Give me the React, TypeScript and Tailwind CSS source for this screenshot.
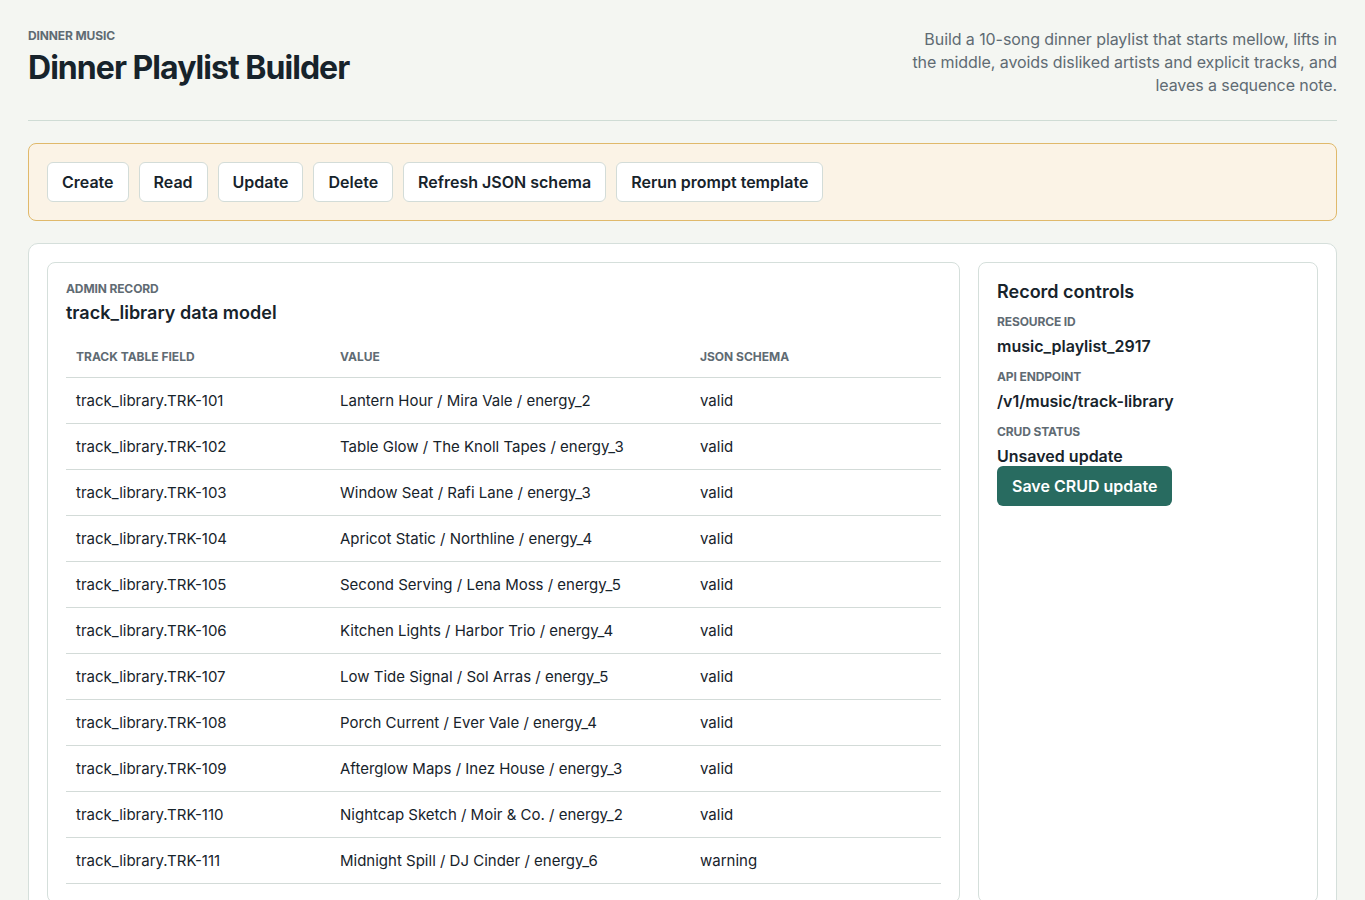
import React from "react";

const rows: [string, string, string][] = [
  ["track_library.TRK-101", "Lantern Hour / Mira Vale / energy_2", "valid"],
  ["track_library.TRK-102", "Table Glow / The Knoll Tapes / energy_3", "valid"],
  ["track_library.TRK-103", "Window Seat / Rafi Lane / energy_3", "valid"],
  ["track_library.TRK-104", "Apricot Static / Northline / energy_4", "valid"],
  ["track_library.TRK-105", "Second Serving / Lena Moss / energy_5", "valid"],
  ["track_library.TRK-106", "Kitchen Lights / Harbor Trio / energy_4", "valid"],
  ["track_library.TRK-107", "Low Tide Signal / Sol Arras / energy_5", "valid"],
  ["track_library.TRK-108", "Porch Current / Ever Vale / energy_4", "valid"],
  ["track_library.TRK-109", "Afterglow Maps / Inez House / energy_3", "valid"],
  ["track_library.TRK-110", "Nightcap Sketch / Moir & Co. / energy_2", "valid"],
  ["track_library.TRK-111", "Midnight Spill / DJ Cinder / energy_6", "warning"],
];

const actions = ["Create", "Read", "Update", "Delete", "Refresh JSON schema", "Rerun prompt template"];

export default function App() {
  return (
    <div
      className="min-h-screen bg-[#f4f6f2] px-[28px] pt-[28px] text-[#17232b]"
      style={{ fontFamily: "Inter, 'Noto Sans', sans-serif" }}
    >
      <header className="flex items-start justify-between border-b border-[#cfdcd5] pb-[23px]">
        <div>
          <div className="text-[12px] font-bold uppercase leading-4 tracking-[-0.01em] text-[#5f6b73]">Dinner music</div>
          <h1 className="mt-[4px] text-[32px] font-bold leading-[40px] tracking-[-0.03em] text-[#17232b]">
            Dinner Playlist Builder
          </h1>
        </div>
        <p className="w-[440px] text-right text-[16px] leading-[23px] tracking-[-0.005em] text-[#5f6b73]">
          Build a 10-song dinner playlist that starts mellow, lifts in the middle, avoids disliked artists and explicit
          tracks, and leaves a sequence note.
        </p>
      </header>

      <div className="mt-[22px] flex flex-wrap gap-[10px] rounded-[8px] border border-[#e0b96b] bg-[#fbf3e6] p-[18px]">
        {actions.map((a) => (
          <button
            key={a}
            className="h-[40px] rounded-[6px] border border-[#d3dcd8] bg-white px-[14px] text-[16px] font-semibold text-[#17232b]"
          >
            {a}
          </button>
        ))}
      </div>

      <div className="mt-[22px] flex items-stretch gap-[18px] rounded-[10px] border border-[#d5dfdb] bg-white p-[18px]">
        <section className="flex-1 rounded-[8px] border border-[#d5dfdb] p-[18px]">
          <div className="text-[12px] font-bold uppercase leading-4 tracking-[-0.01em] text-[#5f6b73]">Admin record</div>
          <h2 className="mt-[5px] text-[18px] font-semibold leading-[22px]">track_library data model</h2>
          <table className="mt-[12px] w-full border-collapse text-left">
            <thead>
              <tr className="border-b border-[#d3dbd8]">
                <th className="w-[264px] px-[10px] pt-[13px] pb-[12px] text-[12px] font-bold uppercase leading-4 text-[#5f6b73]">
                  Track table field
                </th>
                <th className="w-[360px] px-[10px] pt-[13px] pb-[12px] text-[12px] font-bold uppercase leading-4 text-[#5f6b73]">
                  Value
                </th>
                <th className="px-[10px] pt-[13px] pb-[12px] text-[12px] font-bold uppercase leading-4 text-[#5f6b73]">
                  JSON schema
                </th>
              </tr>
            </thead>
            <tbody>
              {rows.map((r) => (
                <tr key={r[0]} className="border-b border-[#d3dbd8]">
                  <td className="px-[10px] py-[12px] text-[15px] leading-[21px]">{r[0]}</td>
                  <td className="px-[10px] py-[12px] text-[15px] leading-[21px]">{r[1]}</td>
                  <td className="px-[10px] py-[12px] text-[15px] leading-[21px]">{r[2]}</td>
                </tr>
              ))}
            </tbody>
          </table>
        </section>

        <aside className="w-[340px] rounded-[8px] border border-[#d5dfdb] p-[18px]">
          <h2 className="text-[18px] font-semibold leading-[22px]">Record controls</h2>
          <div className="mt-[11px] text-[12px] font-bold uppercase leading-4 tracking-[-0.01em] text-[#5f6b73]">Resource ID</div>
          <div className="mt-[6px] text-[16px] font-semibold leading-5">music_playlist_2917</div>
          <div className="mt-[13px] text-[12px] font-bold uppercase leading-4 tracking-[-0.01em] text-[#5f6b73]">API endpoint</div>
          <div className="mt-[6px] text-[16px] font-semibold leading-5">/v1/music/track-library</div>
          <div className="mt-[13px] text-[12px] font-bold uppercase leading-4 tracking-[-0.01em] text-[#5f6b73]">CRUD status</div>
          <div className="mt-[6px] text-[16px] font-semibold leading-5">Unsaved update</div>
          <button className="h-[40px] rounded-[6px] bg-[#286b60] px-[15px] text-[16px] font-semibold text-white">
            Save CRUD update
          </button>
        </aside>
      </div>
    </div>
  );
}
